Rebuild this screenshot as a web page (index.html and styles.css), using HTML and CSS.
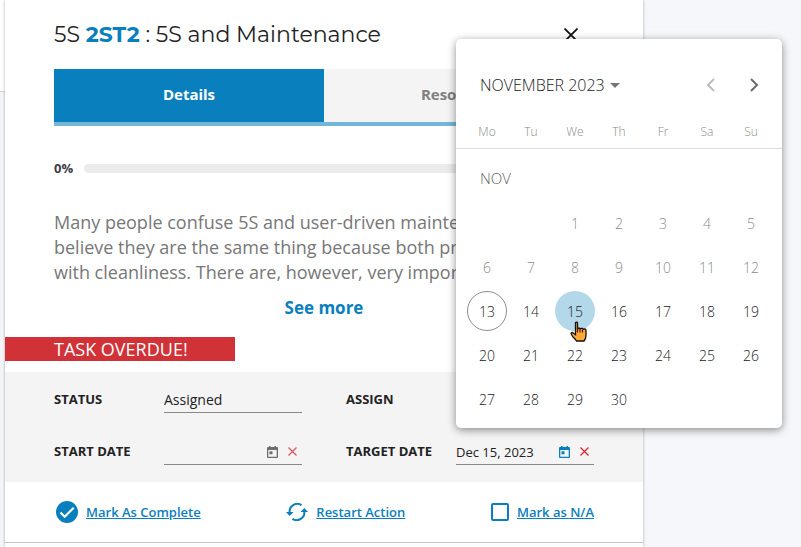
FILE: index.html
```html
<!DOCTYPE html>
<html lang="en">
<head>
<meta charset="UTF-8">
<meta name="viewport" content="width=device-width, initial-scale=1.0">
<title>5S and Maintenance</title>
<link rel="stylesheet" href="styles.css">
</head>
<body>

<div class="gutter"></div>

<main class="panel">
  <header class="panel-header">
    <h1 class="title">5S <strong>2ST2</strong> : 5S and Maintenance</h1>
    <button type="button" class="close" aria-label="Close">
      <svg width="14" height="14" viewBox="0 0 14 14"><path d="M0.5 0.5l13 13M13.5 0.5l-13 13" fill="none" stroke="#111" stroke-width="1.8"/></svg>
    </button>
  </header>

  <nav class="tabs">
    <button type="button" class="tab active">Details</button>
    <button type="button" class="tab">Resources</button>
  </nav>

  <div class="progress">
    <span class="progress-value">0%</span>
    <div class="progress-track"></div>
  </div>

  <p class="description">Many people confuse 5S and user-driven maintenance and believe they are the same thing because both practices deal with cleanliness. There are, however, very important</p>
  <a href="#" class="see-more">See more</a>

  <div class="overdue">TASK OVERDUE!</div>

  <form class="fields">
    <div class="field">
      <label class="label" for="status">STATUS</label>
      <div class="control">
        <select class="input" id="status"><option>Assigned</option></select>
      </div>
    </div>

    <div class="field">
      <label class="label" for="assign">ASSIGN</label>
      <div class="control">
        <input type="text" class="input" id="assign">
      </div>
    </div>

    <div class="field">
      <label class="label" for="startDate">START DATE</label>
      <div class="control muted">
        <input type="text" class="input date" id="startDate">
        <button type="button" class="icon-button" aria-label="Pick start date">
          <svg width="11" height="12" viewBox="0 0 11 12"><path d="M2 0h1.5v1h4V0H9v1h1q1 0 1 1v9q0 1-1 1H1q-1 0-1-1V2q0-1 1-1h1zM1.3 4v6.7h8.4V4z" fill="currentColor" fill-rule="evenodd"/><path d="M2.5 5.3h3v3h-3z" fill="currentColor"/></svg>
        </button>
        <button type="button" class="icon-button clear" aria-label="Clear start date">
          <svg width="9" height="9" viewBox="0 0 9 9"><path d="M0.5 0.5l8 8M8.5 0.5l-8 8" fill="none" stroke="currentColor" stroke-width="1.2"/></svg>
        </button>
      </div>
    </div>

    <div class="field">
      <label class="label" for="targetDate">TARGET DATE</label>
      <div class="control">
        <input type="text" class="input date" id="targetDate" value="Dec 15, 2023">
        <button type="button" class="icon-button" aria-label="Pick target date">
          <svg width="11" height="12" viewBox="0 0 11 12"><path d="M2 0h1.5v1h4V0H9v1h1q1 0 1 1v9q0 1-1 1H1q-1 0-1-1V2q0-1 1-1h1zM1.3 4v6.7h8.4V4z" fill="currentColor" fill-rule="evenodd"/><path d="M2.5 5.3h3v3h-3z" fill="currentColor"/></svg>
        </button>
        <button type="button" class="icon-button clear" aria-label="Clear target date">
          <svg width="9" height="9" viewBox="0 0 9 9"><path d="M0.5 0.5l8 8M8.5 0.5l-8 8" fill="none" stroke="currentColor" stroke-width="1.2"/></svg>
        </button>

        <div class="calendar">
          <div class="calendar-header">
            <button type="button" class="period">NOVEMBER 2023
              <svg width="10" height="5" viewBox="0 0 10 5"><path d="M0 0h10L5 5z" fill="#757575"/></svg>
            </button>
            <button type="button" class="month-nav" aria-label="Previous month" disabled>
              <svg width="9" height="14" viewBox="0 0 9 14"><path d="M8 1L2 7l6 6" fill="none" stroke="currentColor" stroke-width="2"/></svg>
            </button>
            <button type="button" class="month-nav" aria-label="Next month">
              <svg width="9" height="14" viewBox="0 0 9 14"><path d="M1 1l6 6-6 6" fill="none" stroke="currentColor" stroke-width="2"/></svg>
            </button>
          </div>
          <table class="month">
            <thead>
              <tr><th>Mo</th><th>Tu</th><th>We</th><th>Th</th><th>Fr</th><th>Sa</th><th>Su</th></tr>
            </thead>
            <tbody id="days">
              <tr><td colspan="7" class="month-name">NOV</td></tr>
            </tbody>
          </table>
        </div>
      </div>
    </div>
  </form>

  <div class="actions">
    <a href="#" class="action">
      <svg width="22" height="22" viewBox="0 0 22 22"><circle cx="11" cy="11" r="11" fill="#0a7fbd"/><path d="M4.5 11.5l4.2 4.2 9-9" fill="none" stroke="#fff" stroke-width="2.2"/></svg>
      <span>Mark As Complete</span>
    </a>
    <a href="#" class="action">
      <svg width="22" height="18" viewBox="0 0 22 18"><path d="M15.5 2.2A7.6 7.6 0 0 0 3.7 9.5M6.500 15.800A7.6 7.6 0 0 0 18.300 8.500" fill="none" stroke="#0a7fbd" stroke-width="2"/><path d="M0 9h7.5L3.700 13zM14.500 9H22L18.300 5z" fill="#0a7fbd"/></svg>
      <span>Restart Action</span>
    </a>
    <label class="action">
      <input type="checkbox" class="checkbox">
      <span>Mark as N/A</span>
    </label>
  </div>
</main>

<script>
  const days = document.getElementById("days");
  const today = 13;
  const hovered = 15;
  const firstColumn = 2; // the 1st is a Wednesday
  const pointer = `<svg class="pointer" width="17" height="22" viewBox="0 0 17 22"><path d="M5.5 1.5q1.3-1 2 .4V8l1.500-1 1.500.8 1.500-.6 1.500 1 1.500-.3q1 .4 1 1.500v5.100q0 3-2 5.500H6.500Q5 17.500 3 16L1 12.500q.5-1.500 2-.8l2.500 2z" fill="#ffab33" stroke="#111" stroke-width="1.300"/><path d="M7.500 7v4.500M10 8v3.500M12.500 8.500v3" stroke="#5a1010" stroke-width="1.200"/></svg>`;

  let row;
  for (let i = 0; i < 35; i++) {
    if (i % 7 === 0) {
      row = days.insertRow();
    }
    const cell = row.insertCell();
    const day = i - firstColumn + 1;
    if (day < 1 || day > 30) continue;

    const button = document.createElement("button");
    button.type = "button";
    button.className = "day";
    button.textContent = day;
    button.disabled = day < today;
    if (day === today) button.classList.add("today");
    if (day === hovered) {
      button.classList.add("hovered");
      button.insertAdjacentHTML("beforeend", pointer);
    }
    cell.appendChild(button);
  }
</script>

</body>
</html>
```

FILE: styles.css
```css
* {
  box-sizing: border-box;
}
body {
  font-family: "Open Sans", "Noto Sans", sans-serif;
  background-color: #f5f7fa;
  color: #222;
  margin: 0;
  display: flex;
  min-height: 100vh;
  overflow: hidden;
}
button, input, select {
  font: inherit;
  color: inherit;
  background: none;
  border: none;
  border-radius: 0;
  margin: 0;
  padding: 0;
  outline: none;
}
button {
  cursor: pointer;
}
svg {
  display: block;
  flex: none;
}
.gutter {
  width: 5px;
  border-top: 91px solid #fff;
  box-shadow: inset 0 1px 1px #d5d7da;
}
.panel {
  flex: 1;
  min-width: 0;
  margin-right: 158px;
  background-color: #fff;
  box-shadow: 0 0 3px rgba(0, 0, 0, 0.3);
}
.panel-header {
  display: flex;
  justify-content: space-between;
  align-items: center;
  height: 69px;
  padding: 0 49px;
}
.title {
  font-family: Montserrat, Inter, sans-serif;
  font-size: 22px;
  font-weight: 400;
  margin: 0;
}
.title strong {
  color: #0a7fbd;
  font-weight: 700;
}
.close {
  width: 46px;
  height: 46px;
  display: flex;
  justify-content: center;
  align-items: center;
}
.tabs {
  display: flex;
  margin: 0 49px;
  border-bottom: 4px solid #74b6d9;
}
.tab {
  flex: 1;
  height: 53px;
  padding-bottom: 3px;
  font-size: 15px;
  font-weight: 700;
  background-color: #f4f4f4;
  color: #808080;
}
.tab.active {
  background-color: #0a7fbd;
  color: #fff;
}
.progress {
  display: flex;
  align-items: center;
  gap: 11px;
  margin: 32px 49px;
}
.progress-value {
  font-size: 13px;
  line-height: 20px;
  font-weight: 700;
  color: #3c3c46;
}
.progress-track {
  flex: 1;
  height: 9px;
  border-radius: 5px;
  background-color: #ebebeb;
}
.description {
  margin: 0 49px 10px;
  font-size: 18px;
  line-height: 25px;
  color: #777;
}
.see-more {
  display: block;
  text-align: center;
  font-size: 17px;
  line-height: 25px;
  font-weight: 700;
  color: #0a7fbd;
  text-decoration: none;
}
.overdue {
  width: 36%;
  margin: 17px 0 11px;
  padding-left: 49px;
  font-size: 18px;
  line-height: 24px;
  background-color: #d03238;
  color: #fff;
}
.fields {
  display: grid;
  grid-template-columns: 1fr 1fr;
  gap: 26px 44px;
  padding: 15px 49px 17px;
  background-color: #f4f4f4;
}
.field {
  display: grid;
  grid-template-columns: 110px 1fr;
}
.label {
  font-size: 13px;
  line-height: 24px;
  font-weight: 700;
}
.control {
  position: relative;
  display: flex;
  align-items: center;
  height: 26px;
  border-bottom: 1px solid #888;
}
.input {
  flex: 1;
  width: 0;
  font-size: 14px;
  line-height: 24px;
  appearance: none;
}
.input.date {
  font-size: 13px;
}
.icon-button {
  width: 20px;
  height: 24px;
  display: flex;
  justify-content: center;
  align-items: center;
  color: #0a7fbd;
}
.icon-button.clear {
  color: #e0242c;
}
.muted .icon-button {
  color: #6e6e6e;
}
.muted .icon-button.clear {
  color: #d9555b;
}
.calendar {
  position: absolute;
  left: 0;
  bottom: 36px;
  z-index: 1;
  width: 326px;
  padding-bottom: 7px;
  border-radius: 5px;
  background-color: #fff;
  box-shadow: 0 2px 8px rgba(0, 0, 0, 0.45);
}
.calendar-header {
  display: flex;
  align-items: center;
  padding: 24px 6px 14px 24px;
}
.period {
  display: flex;
  align-items: center;
  gap: 5px;
  margin-right: auto;
  font-size: 16px;
  font-weight: 300;
}
.month-nav {
  width: 44px;
  height: 44px;
  display: flex;
  justify-content: center;
  align-items: center;
  color: #6b6b6b;
}
.month-nav:disabled {
  color: #bdbdbd;
}
/* the rule under the weekdays runs past the columns to both edges */
.month {
  width: 100%;
  padding: 0 9px;
  border-spacing: 0;
  table-layout: fixed;
  text-align: center;
  background: linear-gradient(#ddd, #ddd) 0 27px / 100% 1px no-repeat;
}
.month td {
  height: 44px;
  padding: 0;
}
.month th {
  height: 28px;
  padding: 0 0 8px;
  font-size: 12px;
  font-weight: 300;
  color: #8c8c8c;
}
.month .month-name {
  height: 52px;
  padding: 6px 0 0 15px;
  text-align: left;
  font-size: 15px;
  font-weight: 300;
  color: #666;
}
.day {
  position: relative;
  width: 40px;
  height: 40px;
  border-radius: 50%;
  font-size: 14px;
  font-weight: 300;
}
.day:disabled {
  color: #8c8c8c;
}
.day.today {
  border: 1px solid #8c8c8c;
}
.day.hovered {
  background-color: #b3d8ea;
}
.pointer {
  position: absolute;
  left: 15px;
  top: 30px;
}
.actions {
  display: flex;
  justify-content: space-between;
  align-items: center;
  height: 61px;
  padding: 0 49px 0 51px;
  border-bottom: 1px solid #c4c4c4;
}
.action {
  display: flex;
  align-items: center;
  gap: 8px;
  font-size: 13px;
  font-weight: 600;
  color: #0a7fbd;
  text-decoration: underline;
}
.checkbox {
  appearance: none;
  width: 18px;
  height: 18px;
  border: 2px solid #0a7fbd;
  border-radius: 2px;
}
```
